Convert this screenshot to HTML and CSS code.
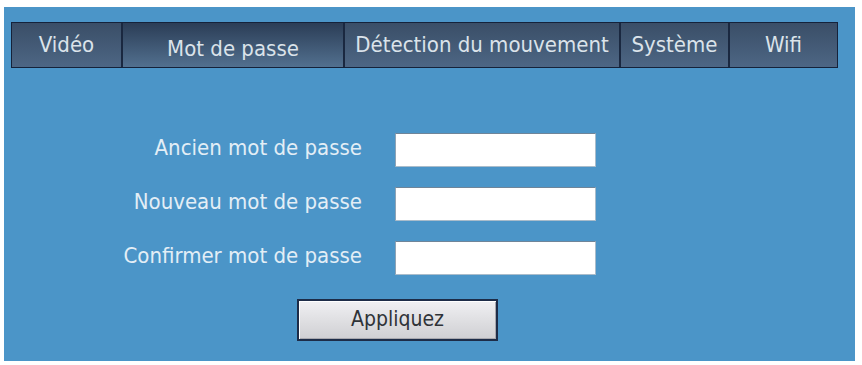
FILE: index.html
```html
<!DOCTYPE html>
<html lang="fr">
<head>
<meta charset="utf-8">
<title>Mot de passe</title>
<link rel="stylesheet" href="styles.css">
</head>
<body>
<div class="panel">
  <nav class="tabs">
    <div class="tab t-video">Vidéo</div>
    <div class="tab t-pass active">Mot de passe</div>
    <div class="tab t-motion">Détection du mouvement</div>
    <div class="tab t-sys">Système</div>
    <div class="tab t-wifi">Wifi</div>
  </nav>
  <form class="form">
    <label class="lbl" for="old">Ancien mot de passe</label>
    <input class="field" id="old" type="password">
    <label class="lbl" for="new">Nouveau mot de passe</label>
    <input class="field" id="new" type="password">
    <label class="lbl" for="conf">Confirmer mot de passe</label>
    <input class="field" id="conf" type="password">
  </form>
  <div class="actions">
    <button class="apply" type="button">Appliquez</button>
  </div>
</div>
</body>
</html>
```
FILE: styles.css
```css
html, body {
  margin: 0;
  padding: 0;
  background: #ffffff;
}
body {
  font-family: "DejaVu Sans Condensed", "DejaVu Sans", sans-serif;
  padding: 7px 7px 4px 4px;
}
.panel {
  background: #4b95c8;
  height: 354px;
  box-sizing: border-box;
  padding-top: 15px;
  display: flex;
  flex-direction: column;
}
.tabs {
  display: flex;
  margin-left: 7px;
  width: 827px;
  height: 46px;
  background: #1d2c44;
  border: 1px solid #15223a;
  box-sizing: border-box;
}
.tab {
  box-sizing: border-box;
  display: flex;
  align-items: center;
  justify-content: center;
  color: #dbe3ea;
  font-size: 22px;
  white-space: nowrap;
  background: linear-gradient(#3a4e67, #4d6684);
  border-right: 2px solid #1a2840;
  padding-bottom: 2px;
}
.tab:last-child { border-right: none; }
.tab.active {
  background: linear-gradient(#2b3d56, #52708f);
  padding-top: 6px;
  padding-bottom: 0;
}
.t-video { width: 111px; }
.t-pass { width: 222px; }
.t-motion { width: 276px; }
.t-sys { width: 109px; }
.t-wifi { flex: 1; }
.form {
  margin: 65px 0 0 0;
  display: grid;
  grid-template-columns: 358px 201px;
  column-gap: 33px;
  row-gap: 20px;
  align-items: center;
}
.lbl {
  text-align: right;
  color: #e3eef6;
  font-size: 22px;
  white-space: nowrap;
  padding-bottom: 6px;
}
.field {
  width: 201px;
  height: 34px;
  box-sizing: border-box;
  margin: 0;
  background: #ffffff;
  border: 1px solid #a9bccb;
  border-top-color: #6f8599;
  border-left-color: #8ea3b5;
  outline: none;
}
.actions {
  margin: 24px 0 0 293px;
}
.apply {
  width: 201px;
  height: 42px;
  box-sizing: border-box;
  border: 2px solid #1d2c48;
  background: linear-gradient(#f0f0f3, #dcdcdf 60%, #cfcfd3);
  color: #2f3338;
  font-family: "DejaVu Sans Condensed", "DejaVu Sans", sans-serif;
  font-size: 21px;
  padding: 0 0 2px 0;
  box-shadow: inset 1px 1px 0 #ffffff, inset -1px -1px 0 #a8a8ae;
}
```
